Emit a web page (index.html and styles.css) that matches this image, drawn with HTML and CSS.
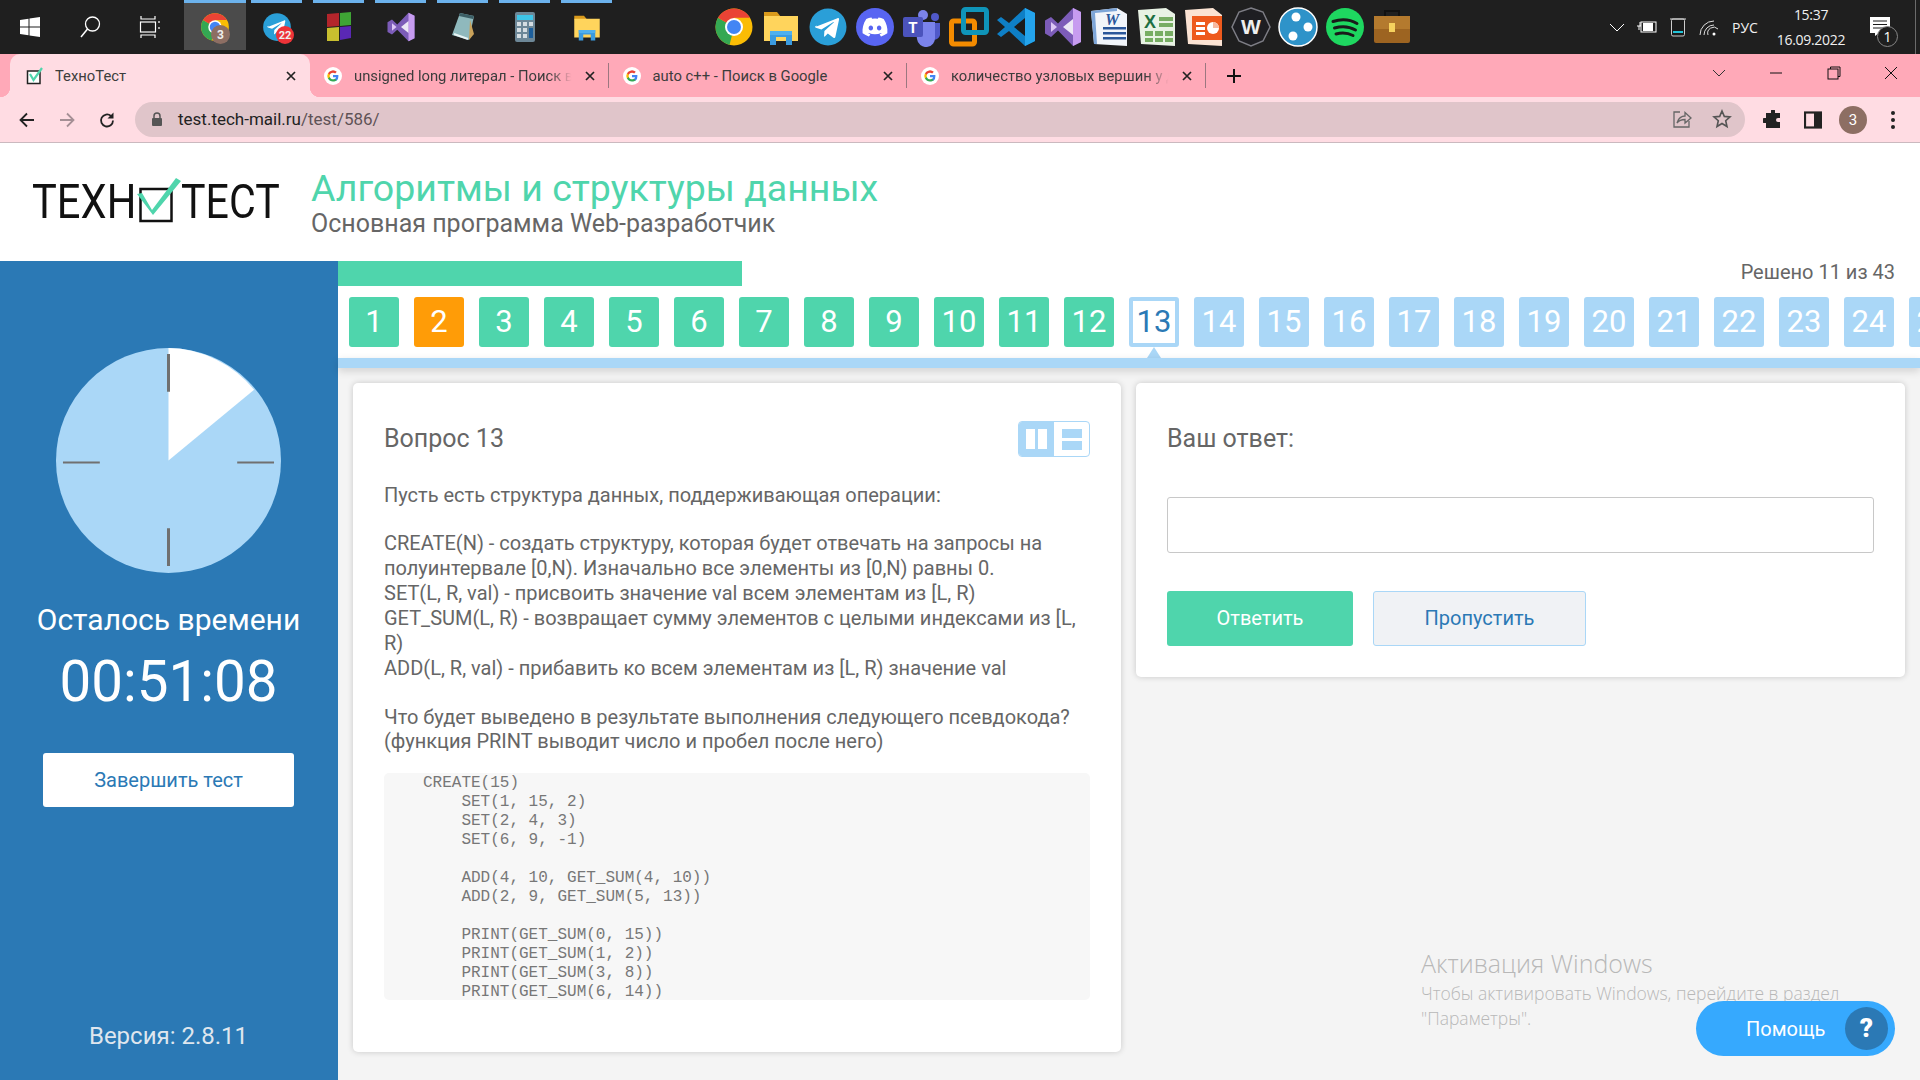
FILE: index.html
```html
<!DOCTYPE html>
<html lang="ru">
<head>
<meta charset="utf-8">
<title>ТехноТест</title>
<link rel="stylesheet" href="styles.css">
</head>
<body>
<svg class="sprite" xmlns="http://www.w3.org/2000/svg">
  <symbol id="i-chrome" viewBox="0 0 40 40">
    <circle cx="20" cy="20" r="18.5" fill="#fbbc04"/>
    <path d="M20 20L4 10.8A18.5 18.5 0 0 0 15.5 38z" fill="#34a853"/>
    <path d="M20 20L4 10.8A18.5 18.5 0 0 1 36 10.8H20z" fill="#ea4335"/>
    <circle cx="20" cy="20" r="9" fill="#fff"/><circle cx="20" cy="20" r="7" fill="#4285f4"/>
  </symbol>
  <symbol id="i-telegram" viewBox="0 0 40 40">
    <circle cx="20" cy="20" r="18.5" fill="#2a9fd8"/>
    <path d="M8.5 19.5l21-8.3c1-.3 1.8.3 1.5 1.6l-3.6 17c-.2 1.2-1 1.5-2 .9l-5.6-4.1-2.7 2.6c-.3.3-.6.5-1.1.5l.4-5.7 9.3-8.6c.4-.4-.1-.6-.7-.2l-11.6 7.2-5.5-1.7c-1.2-.4-1.2-1.2.6-2.2z" fill="#fff"/>
  </symbol>
  <symbol id="i-folder" viewBox="0 0 40 40">
    <path d="M3 5h13l4 5H3z" fill="#d99a1c"/>
    <rect x="3" y="9" width="34" height="25" fill="#ffd45c"/>
    <path d="M9 38V24h22v14h-6v-8H15v8z" fill="#3b9be0"/>
    <rect x="9" y="24" width="22" height="4" fill="#4fb0ee"/>
  </symbol>
  <symbol id="i-vs" viewBox="0 0 40 40">
    <path d="M8 10l-6 3.5v13L8 30l7-6.5 15 15.5 8-4V5l-8-4-15 15.500z" fill="#7c5cb8"/>
    <path d="M30 1l8 4v30l-8 4z" fill="#c79cf0"/>
    <path d="M8 15v10l6-5z" fill="#dcc6f5"/>
    <path d="M30 12v16l-10-8z" fill="#fff" opacity=".85"/>
  </symbol>
  <symbol id="i-g" viewBox="0 0 20 20">
    <circle cx="10" cy="10" r="10" fill="#fff"/>
    <path d="M16 10.200c0-.5 0-.9-.1-1.300H10v2.500h3.400a3 3 0 0 1-1.300 1.900v1.600h2.100a6.300 6.300 0 0 0 1.800-4.700z" fill="#4285f4"/>
    <path d="M10 16.200c1.700 0 3.100-.6 4.200-1.500l-2.100-1.600c-.6.4-1.300.6-2.100.6-1.600 0-3-1.100-3.500-2.600H4.400v1.700a6.300 6.300 0 0 0 5.600 3.400z" fill="#34a853"/>
    <path d="M6.500 11.100a3.800 3.800 0 0 1 0-2.400V7H4.400a6.300 6.300 0 0 0 0 5.700z" fill="#fbbc04"/>
    <path d="M10 6.300c.9 0 1.800.3 2.400.9l1.800-1.800A6.300 6.300 0 0 0 4.400 7l2.100 1.700c.5-1.400 1.900-2.400 3.500-2.400z" fill="#ea4335"/>
  </symbol>
  <symbol id="i-close" viewBox="0 0 12 12">
    <path d="M2 2l8 8M10 2l-8 8" stroke="#222" stroke-width="1.700" fill="none"/>
  </symbol>
</svg>

<div class="taskbar">
  <div class="sys-btn">
    <svg class="i20" viewBox="0 0 20 20"><path d="M0 3l8.500-1.200v7.600H0zM9.500 1.600L20 0v9.400H9.500zM0 10.400h8.500v7.800L0 17zM9.500 10.400H20V20L9.500 18.400z" fill="#fff"/></svg>
  </div>
  <div class="sys-btn">
    <svg class="i24" viewBox="0 0 24 24"><circle cx="14.500" cy="9" r="7" fill="none" stroke="#fff" stroke-width="1.300"/><path d="M9.500 14L3 22" stroke="#fff" stroke-width="1.500"/></svg>
  </div>
  <div class="sys-btn">
    <svg class="i24" viewBox="0 0 24 24"><path d="M3 1v3h14V1M3 23v-3h14v3M21 6v2M21 12v2" stroke="#fff" stroke-width="1.200" fill="none"/><rect x="2.500" y="7" width="15" height="10" fill="none" stroke="#fff" stroke-width="1.200"/></svg>
  </div>
  <div class="pins">
    <div class="pin pin-active">
      <svg class="i30" viewBox="0 0 40 40"><use href="#i-chrome"/></svg>
      <span class="pin-badge pin-badge-brown">3</span>
    </div>
    <div class="pin">
      <svg class="i30" viewBox="0 0 40 40"><use href="#i-telegram"/></svg>
      <span class="pin-badge pin-badge-red">22</span>
    </div>
    <div class="pin">
      <svg class="i30" viewBox="0 0 30 30"><path d="M3 2l12-1v13L3 15z" fill="#b3252b"/><path d="M16 1l11-1v13l-11 1z" fill="#3fa535"/><path d="M3 16l12-1v14L3 29z" fill="#c8bf2f"/><path d="M16 15l11-1v12l-11 2z" fill="#5a28b4"/></svg>
    </div>
    <div class="pin"><svg class="i30" viewBox="0 0 40 40"><use href="#i-vs"/></svg></div>
    <div class="pin">
      <svg class="i30" viewBox="0 0 30 30"><path d="M12 1l14 3-5 24-17-5z" fill="#8fb9bd"/><path d="M12 1l14 3-1 3-14-3z" fill="#3c5f66"/><path d="M22 8l4 14-5 6z" fill="#c9a25a"/><path d="M6 22l14 5" stroke="#e8f4f4" stroke-width="2"/></svg>
    </div>
    <div class="pin">
      <svg class="i30" viewBox="0 0 30 30"><rect x="5" y="0" width="20" height="30" rx="2" fill="#6d8797"/><rect x="7" y="3" width="16" height="5" fill="#3ec5e8"/><path d="M7 10h4v4H7zM13 10h4v4h-4zM19 10h4v4h-4zM7 16h4v4H7zM13 16h4v4h-4zM7 22h4v4H7zM13 22h4v4h-4z" fill="#d5dde2"/><rect x="19" y="16" width="4" height="10" fill="#1d5f9c"/></svg>
    </div>
    <div class="pin"><svg class="i30" viewBox="0 0 40 40"><use href="#i-folder"/></svg></div>
  </div>
  <div class="apps">
    <div class="app"><svg class="i40" viewBox="0 0 40 40"><use href="#i-chrome"/></svg></div>
    <div class="app"><svg class="i40" viewBox="0 0 40 40"><use href="#i-folder"/></svg></div>
    <div class="app"><svg class="i40" viewBox="0 0 40 40"><use href="#i-telegram"/></svg></div>
    <div class="app">
      <svg class="i40" viewBox="0 0 40 40"><circle cx="20" cy="20" r="19" fill="#5865f2"/><g transform="translate(7.500 7.500) scale(1.040)"><path d="M20.317 4.370a19.791 19.791 0 0 0-4.885-1.515.074.074 0 0 0-.079.037c-.21.375-.444.864-.608 1.250a18.270 18.270 0 0 0-5.487 0 12.640 12.640 0 0 0-.617-1.250.077.077 0 0 0-.079-.037A19.736 19.736 0 0 0 3.677 4.370a.070.070 0 0 0-.032.027C.533 9.046-.32 13.580.099 18.057a.082.082 0 0 0 .031.057 19.900 19.900 0 0 0 5.993 3.030.078.078 0 0 0 .084-.028 14.090 14.090 0 0 0 1.226-1.994.076.076 0 0 0-.041-.106 13.107 13.107 0 0 1-1.872-.892.077.077 0 0 1-.008-.128 10.200 10.200 0 0 0 .372-.292.074.074 0 0 1 .077-.010c3.928 1.793 8.180 1.793 12.062 0a.074.074 0 0 1 .078.010c.12.098.246.198.373.292a.077.077 0 0 1-.006.127 12.299 12.299 0 0 1-1.873.892.077.077 0 0 0-.041.107c.36.698.772 1.362 1.225 1.993a.076.076 0 0 0 .084.028 19.839 19.839 0 0 0 6.002-3.030.077.077 0 0 0 .032-.054c.5-5.177-.838-9.674-3.549-13.660a.061.061 0 0 0-.031-.030zM8.020 15.330c-1.183 0-2.157-1.085-2.157-2.419 0-1.333.956-2.419 2.157-2.419 1.210 0 2.176 1.096 2.157 2.420 0 1.333-.956 2.418-2.157 2.418zm7.975 0c-1.183 0-2.157-1.085-2.157-2.419 0-1.333.955-2.419 2.157-2.419 1.210 0 2.176 1.096 2.157 2.420 0 1.333-.946 2.418-2.157 2.418z" fill="#fff"/></g></svg>
    </div>
    <div class="app">
      <svg class="i40" viewBox="0 0 40 40"><circle cx="21" cy="8" r="5" fill="#7b83eb"/><circle cx="33" cy="10" r="4" fill="#5059c9"/><path d="M28 16h10v12a6 6 0 0 1-10 3z" fill="#5059c9"/><path d="M13 15h20v15a9 9 0 0 1-18 2z" fill="#7b83eb"/><rect x="1" y="10" width="20" height="20" rx="2" fill="#4b53bc"/><text x="11" y="26" class="svg-t">T</text></svg>
    </div>
    <div class="app">
      <svg class="i40" viewBox="0 0 40 40"><rect x="2.500" y="14" width="23" height="23" rx="2" fill="none" stroke="#f38b00" stroke-width="5"/><rect x="14.500" y="2.500" width="23" height="23" rx="2" fill="none" stroke="#0f94b8" stroke-width="5"/></svg>
    </div>
    <div class="app">
      <svg class="i40" viewBox="0 0 40 40"><path d="M29 1l10 5v28l-10 5-16-15-8 6-4-3 8-7-8-7 4-3 8 6z" fill="#0e7fc6"/><path d="M29 1l10 5v28l-10 5z" fill="#24a4ec"/><path d="M29 11v18l-11-9z" fill="#1b1b1b"/></svg>
    </div>
    <div class="app"><svg class="i40" viewBox="0 0 40 40"><use href="#i-vs"/></svg></div>
    <div class="app">
      <svg class="i40" viewBox="0 0 40 40"><path d="M1 4l26-3 10 6v32L4 37z" fill="#f2f5fa"/><path d="M1 4l26-3v3L5 6l2 31H4z" fill="#7ea6d8"/><path d="M13 20h23v2.500H13zM13 25h23v2.500H13zM13 30h23v2.500H13z" fill="#2b579a"/><text x="22" y="18" class="svg-w">W</text></svg>
    </div>
    <div class="app">
      <svg class="i40" viewBox="0 0 40 40"><path d="M1 3l28-2 9 6v32L4 37z" fill="#e8f2e4"/><path d="M22 10h14v4H22zM22 16h14v4H22zM8 24h8v5H8zM18 24h8v5h-8zM28 24h8v5h-8zM8 31h8v4H8zM18 31h8v4h-8zM28 31h8v4h-8z" fill="#77ad63"/><text x="13" y="21" class="svg-x">X</text></svg>
    </div>
    <div class="app">
      <svg class="i40" viewBox="0 0 40 40"><path d="M1 3l28-2 9 7v31L4 37z" fill="#fbe3d3"/><rect x="8" y="9" width="30" height="24" fill="#ee5a1d"/><path d="M12 15h9v3h-9zM12 20h9v3h-9zM12 25h9v3h-9z" fill="#fff"/><circle cx="29" cy="21" r="6" fill="#fff"/><path d="M29 21V15a6 6 0 0 1 6 6z" fill="#f7b9a0"/></svg>
    </div>
    <div class="app">
      <svg class="i40" viewBox="0 0 40 40"><path d="M20 1l12 4 7 15-7 14-12 5-12-5-7-14 7-15z" fill="#1e1e22" stroke="#7d7d85" stroke-width="1.500"/><text x="20" y="27" class="svg-wm">W</text></svg>
    </div>
    <div class="app">
      <svg class="i40" viewBox="0 0 40 40"><circle cx="20" cy="20" r="19" fill="#2e93c9" stroke="#fff" stroke-width="1.500"/><circle cx="18" cy="10" r="4.500" fill="#fff"/><circle cx="30" cy="20" r="4.500" fill="#fff"/><circle cx="15" cy="29" r="4.500" fill="#fff"/></svg>
    </div>
    <div class="app">
      <svg class="i40" viewBox="0 0 40 40"><circle cx="20" cy="20" r="19" fill="#1ed760"/><path d="M8 14.500c8-2.500 17-2 24 2M9.500 21c7-2 15-1.500 21 2M11 27c6-1.500 12-1 17 1.500" stroke="#1a1a1a" stroke-width="3" fill="none" stroke-linecap="round"/></svg>
    </div>
    <div class="app">
      <svg class="i40" viewBox="0 0 40 40"><path d="M13 9V4h14v5" fill="none" stroke="#111" stroke-width="2"/><rect x="2" y="9" width="36" height="27" rx="2" fill="#9d6421"/><rect x="2" y="9" width="36" height="13" fill="#b47a2e"/><rect x="17" y="16" width="6" height="9" fill="#f6d25e"/></svg>
    </div>
  </div>
  <div class="tray">
    <div class="tray-slot tray-w30"><svg class="i16" viewBox="0 0 16 16"><path d="M1 5l7 7 7-7" fill="none" stroke="#fff" stroke-width="1"/></svg></div>
    <div class="tray-slot tray-w30"><svg class="i20" viewBox="0 0 20 20"><path d="M3 5v4M0 9h4M2 9v4" stroke="#fff" fill="none"/><rect x="4" y="5" width="15" height="10" fill="none" stroke="#fff"/><rect x="6" y="6" width="10" height="8" fill="#fff"/></svg></div>
    <div class="tray-slot tray-w31"><svg class="i20" viewBox="0 0 20 20"><rect x="3.500" y="2" width="13" height="17" rx="1.500" fill="#1a1a1a" stroke="#ccc"/><path d="M2 2h16" stroke="#ddd"/><path d="M5 14h10v2H5z" fill="#22c4d8"/></svg></div>
    <div class="tray-slot tray-w30"><svg class="i20" viewBox="0 0 20 20"><path d="M2 18a14 14 0 0 1 14-14M6 18a10 10 0 0 1 10-10M10 18a6 6 0 0 1 10-6" fill="none" stroke="#ddd"/><circle cx="16" cy="17" r="1.500" fill="#fff"/></svg></div>
    <div class="tray-lang">РУС</div>
    <div class="tray-clock"><span>15:37</span><span>16.09.2022</span></div>
    <div class="tray-notify">
      <svg class="i20" viewBox="0 0 20 20"><path d="M0 0h20v16H9l-4 3v-3H0z" fill="#fff"/><path d="M3 4h14M3 7.500h14M3 11h14" stroke="#1a1a1a"/></svg>
      <span class="tray-count">1</span>
    </div>
    <div class="tray-desk"></div>
  </div>
</div>

<div class="tabstrip">
  <div class="tab tab-active">
    <svg class="tab-icon" viewBox="0 0 18 18"><rect x="1.500" y="4" width="12.500" height="12.500" fill="#fff" stroke="#222" stroke-width="1.500"/><path d="M4 7l3.500 6L16 1" fill="none" stroke="#4fd5ac" stroke-width="2.200"/></svg>
    <span class="tab-title">ТехноТест</span>
    <svg class="tab-close" viewBox="0 0 12 12"><use href="#i-close"/></svg>
  </div>
  <div class="tab">
    <svg class="tab-icon" viewBox="0 0 20 20"><use href="#i-g"/></svg>
    <span class="tab-title tab-fade">unsigned long литерал - Поиск в Google</span>
    <svg class="tab-close" viewBox="0 0 12 12"><use href="#i-close"/></svg>
  </div>
  <div class="tab">
    <svg class="tab-icon" viewBox="0 0 20 20"><use href="#i-g"/></svg>
    <span class="tab-title">auto c++ - Поиск в Google</span>
    <svg class="tab-close" viewBox="0 0 12 12"><use href="#i-close"/></svg>
  </div>
  <div class="tab">
    <svg class="tab-icon" viewBox="0 0 20 20"><use href="#i-g"/></svg>
    <span class="tab-title tab-fade">количество узловых вершин у дерева</span>
    <svg class="tab-close" viewBox="0 0 12 12"><use href="#i-close"/></svg>
  </div>
  <svg class="tab-plus" viewBox="0 0 16 16"><path d="M8 1v14M1 8h14" stroke="#111" stroke-width="2"/></svg>
  <div class="win-controls">
    <div class="win-btn"><svg class="i14" viewBox="0 0 14 14"><path d="M1 4l6 6 6-6" fill="none" stroke="#333"/></svg></div>
    <div class="win-btn"><svg class="i14" viewBox="0 0 14 14"><path d="M1 7h12" stroke="#111"/></svg></div>
    <div class="win-btn"><svg class="i14" viewBox="0 0 14 14"><rect x="1" y="3" width="10" height="10" fill="none" stroke="#111"/><path d="M3.500 3V1h9.500v9.500h-2" fill="none" stroke="#111"/></svg></div>
    <div class="win-btn"><svg class="i14" viewBox="0 0 14 14"><path d="M1 1l12 12M13 1L1 13" stroke="#111"/></svg></div>
  </div>
</div>

<div class="toolbar">
  <div class="tool-btn"><svg class="i18" viewBox="0 0 18 18"><path d="M16 9H3M9 2.500L2.500 9 9 15.500" fill="none" stroke="#222" stroke-width="1.800"/></svg></div>
  <div class="tool-btn"><svg class="i18" viewBox="0 0 18 18"><path d="M2 9h13M9 2.500L15.500 9 9 15.500" fill="none" stroke="#a58f95" stroke-width="1.800"/></svg></div>
  <div class="tool-btn"><svg class="i18" viewBox="0 0 18 18"><path d="M15 9.500A6 6 0 1 1 13 5" fill="none" stroke="#222" stroke-width="1.800"/><path d="M15.500 1.500v6h-6z" fill="#222"/></svg></div>
  <div class="omnibox">
    <svg class="omni-lock" viewBox="0 0 16 16"><path d="M5 7V5a3 3 0 0 1 6 0v2" fill="none" stroke="#555" stroke-width="1.500"/><rect x="3" y="7" width="10" height="8" rx="1" fill="#555"/></svg>
    <span class="omni-url"><span class="omni-host">test.tech-mail.ru</span>/test/586/</span>
    <div class="omni-btn"><svg class="i20" viewBox="0 0 20 20"><path d="M8 3H2v15h15v-6" fill="none" stroke="#666" stroke-width="1.300"/><path d="M5 14c1-5 5-7 8-7V3.500l6 5.500-6 5v-3.500c-3 0-6 1-8 3.500z" fill="none" stroke="#666" stroke-width="1.300"/></svg></div>
    <div class="omni-btn"><svg class="i20" viewBox="0 0 20 20"><path d="M10 2l2.300 5.400 5.700.5-4.300 3.800 1.300 5.800-5-3-5 3 1.300-5.800L2 7.900l5.700-.5z" fill="none" stroke="#555" stroke-width="1.600"/></svg></div>
  </div>
  <div class="tool-right">
    <div class="tool-btn"><svg class="i20" viewBox="0 0 20 20"><path d="M8 1a2 2 0 0 1 4 0v2h5v5h-2a2 2 0 0 0 0 4h2v6H3v-5H1.500a2.500 2.500 0 0 1 0-5H3V3h5z" fill="#222"/></svg></div>
    <div class="tool-btn"><svg class="i18" viewBox="0 0 18 18"><rect x="1" y="1.500" width="16" height="15" fill="none" stroke="#222" stroke-width="2.200"/><rect x="10" y="1.500" width="7" height="15" fill="#222"/></svg></div>
    <div class="tool-btn"><span class="avatar">3</span></div>
    <div class="tool-btn"><span class="dots"><i></i><i></i><i></i></span></div>
  </div>
</div>

<header class="site-header">
  <div class="logo">
    <span class="logo-word logo-word-a">ТЕХН</span>
    <svg class="logo-check" viewBox="0 0 46 46"><rect x="4.500" y="11" width="31" height="32" fill="none" stroke="#111" stroke-width="2.500"/><path d="M1 16l5-1 10 17L40 0l5 3-28 34z" fill="#4fd5ac"/></svg>
    <span class="logo-word logo-word-b">ТЕСТ</span>
  </div>
  <div class="site-titles">
    <h1 class="site-title">Алгоритмы и структуры данных</h1>
    <div class="site-sub">Основная программа Web-разработчик</div>
  </div>
</header>

<div class="main">
  <aside class="sidebar">
    <svg class="clock" viewBox="0 0 226 226">
      <circle cx="113" cy="113" r="113" fill="#aad7f7"/>
      <path d="M113 113V0A113 113 0 0 1 199 42z" fill="#fff"/>
      <path d="M113 6v38M113 181v38" stroke="#707070" stroke-width="3"/>
      <path d="M7 115h37M182 115h37" stroke="#707070" stroke-width="2"/>
    </svg>
    <div class="time-label">Осталось времени</div>
    <div class="time-value">00:51:08</div>
    <button class="finish-btn">Завершить тест</button>
    <div class="version">Версия: 2.8.11</div>
  </aside>

  <div class="content">
    <div class="progress-row">
      <div class="progress-bar"></div>
      <div class="solved">Решено 11 из 43</div>
    </div>
    <div class="qnav">
      <span class="qn qn-done">1</span><span class="qn qn-skip">2</span><span class="qn qn-done">3</span><span class="qn qn-done">4</span><span class="qn qn-done">5</span><span class="qn qn-done">6</span><span class="qn qn-done">7</span><span class="qn qn-done">8</span><span class="qn qn-done">9</span><span class="qn qn-done">10</span><span class="qn qn-done">11</span><span class="qn qn-done">12</span><span class="qn qn-current">13</span><span class="qn">14</span><span class="qn">15</span><span class="qn">16</span><span class="qn">17</span><span class="qn">18</span><span class="qn">19</span><span class="qn">20</span><span class="qn">21</span><span class="qn">22</span><span class="qn">23</span><span class="qn">24</span><span class="qn">25</span>
    </div>
    <div class="qnav-strip"></div>
    <div class="cards">
      <section class="card card-question">
        <div class="card-head">
          <h2 class="card-title">Вопрос 13</h2>
          <div class="layout-toggle">
            <span class="lt-half lt-on"><i></i><i></i></span>
            <span class="lt-half lt-off"><i></i><i></i></span>
          </div>
        </div>
        <p class="q-p q-p1">Пусть есть структура данных, поддерживающая операции:</p>
        <p class="q-p q-p2">CREATE(N) - создать структуру, которая будет отвечать на запросы на полуинтервале [0,N). Изначально все элементы из [0,N) равны 0.<br>SET(L, R, val) - присвоить значение val всем элементам из [L, R)<br>GET_SUM(L, R) - возвращает сумму элементов с целыми индексами из [L, R)<br>ADD(L, R, val) - прибавить ко всем элементам из [L, R) значение val</p>
        <p class="q-p q-p3">Что будет выведено в результате выполнения следующего псевдокода?<br>(функция PRINT выводит число и пробел после него)</p>
<pre class="code">    CREATE(15)
        SET(1, 15, 2)
        SET(2, 4, 3)
        SET(6, 9, -1)

        ADD(4, 10, GET_SUM(4, 10))
        ADD(2, 9, GET_SUM(5, 13))

        PRINT(GET_SUM(0, 15))
        PRINT(GET_SUM(1, 2))
        PRINT(GET_SUM(3, 8))
        PRINT(GET_SUM(6, 14))</pre>
      </section>
      <section class="card card-answer">
        <h2 class="card-title answer-title">Ваш ответ:</h2>
        <input class="answer-input" type="text">
        <div class="answer-actions">
          <button class="btn btn-answer">Ответить</button>
          <button class="btn btn-skip">Пропустить</button>
        </div>
      </section>
    </div>
  </div>
</div>

<div class="watermark">
  <div class="wm-title">Активация Windows</div>
  <div class="wm-text">Чтобы активировать Windows, перейдите в раздел<br>"Параметры".</div>
</div>

<div class="help">
  <span class="help-label">Помощь</span>
  <span class="help-q">?</span>
</div>
</body>
</html>
```
FILE: styles.css
```css
* { box-sizing: border-box; }
html, body { margin: 0; height: 100%; }
body {
  width: 1920px; height: 1080px; overflow: hidden;
  display: flex; flex-direction: column;
  background: #f4f4f4; color: #666;
  font-family: Roboto, "Noto Sans", sans-serif;
  position: relative;
}
.sprite { display: none; }
svg { display: block; flex: none; }
.i14 { width: 14px; height: 14px; }
.i16 { width: 16px; height: 16px; }
.i18 { width: 18px; height: 18px; }
.i20 { width: 20px; height: 20px; }
.i24 { width: 24px; height: 24px; }
.i30 { width: 30px; height: 30px; }
.i40 { width: 40px; height: 40px; }

/* taskbar */
.taskbar { height: 54px; flex: none; background: #1f1f1f; display: flex; align-items: stretch; }
.sys-btn { width: 60px; display: flex; align-items: center; justify-content: center; }
.pins { display: flex; margin-left: 4px; }
.pin { width: 62px; position: relative; display: flex; align-items: center; justify-content: center; }
.pin::before { content: ""; position: absolute; top: 0; left: 5px; right: 6px; height: 3px; background: #6cb2ec; }
.pin-active { background: linear-gradient(#4b4b4b, #4b4b4b) no-repeat top / 100% 50px; }
.pin-active::before { left: 0; right: 0; }
.pin-badge { position: absolute; border-radius: 50%; color: #eee; font-size: 11px; font-weight: 700; display: flex; align-items: center; justify-content: center; }
.pin-badge-brown { width: 19px; height: 19px; left: 27px; top: 25px; background: #8d6e63; font-size: 12px; }
.pin-badge-red { width: 18px; height: 18px; left: 30px; top: 26px; background: #ee3338; }
.apps { display: flex; margin-left: 92.500px; }
.app { width: 47px; display: flex; align-items: center; justify-content: center; }
.svg-t { font: 700 15px Roboto, sans-serif; fill: #fff; text-anchor: middle; }
.svg-w { font: italic 700 16px "Liberation Serif", serif; fill: #2b579a; text-anchor: middle; }
.svg-x { font: 700 18px "Liberation Sans", sans-serif; fill: #1d6f42; text-anchor: middle; }
.svg-wm { font: 700 21px "Liberation Sans", sans-serif; fill: #eee; text-anchor: middle; }
.tray { margin-left: auto; display: flex; color: #f0f0f0; }
.tray-slot { display: flex; align-items: center; justify-content: center; }
.tray-w30 { width: 30px; }
.tray-w31 { width: 31px; }
.tray-lang { width: 44px; display: flex; align-items: center; justify-content: center; font: 14px "Open Sans", sans-serif; }
.tray-clock { width: 88px; display: flex; flex-direction: column; align-items: center; justify-content: center; gap: 8px; font: 14px/17px "Open Sans", sans-serif; letter-spacing: -.3px; }
.tray-notify { width: 50px; position: relative; display: flex; align-items: center; justify-content: center; }
.tray-count { position: absolute; left: 22px; top: 26px; width: 21px; height: 21px; border-radius: 50%; border: 1px solid #888; background: #1f1f1f; color: #fff; font: 14px/19px "Open Sans", sans-serif; text-align: center; }
.tray-desk { width: 11px; margin-right: 4px; border-right: 1px solid #6b6b6b; }

/* tabs */
.tabstrip { height: 43px; flex: none; background: #ffa9b8; display: flex; align-items: center; padding-left: 10px; color: #3c3c3c; font: 14.800px "Roboto", sans-serif; }
.tab { width: 298.500px; height: 43px; display: flex; align-items: center; padding: 0 9px 0 14px; position: relative; }
.tab + .tab::after { content: ""; position: absolute; right: 0; top: 9px; height: 25px; width: 1px; background: #9c7780; }
.tab-active { width: 300px; background: #ffdce3; border-radius: 10px 10px 0 0; padding-left: 16px; }
.tab-active .tab-title { margin-left: 11px; }
.tab-active::before, .tab-active::after { content: ""; position: absolute; bottom: 0; width: 10px; height: 10px; }
.tab-active::before { left: -10px; background: radial-gradient(circle at 0 0, transparent 10px, #ffdce3 10.500px); }
.tab-active::after { right: -10px; background: radial-gradient(circle at 100% 0, transparent 10px, #ffdce3 10.500px); }
.tab-icon { width: 18px; height: 18px; }
.tab-title { flex: 1; margin: 0 0 0 12px; white-space: nowrap; overflow: hidden; }
.tab-fade { -webkit-mask-image: linear-gradient(90deg, #000 88%, transparent 98%); mask-image: linear-gradient(90deg, #000 88%, transparent 98%); }
.tab-close { width: 12px; height: 12px; margin: 0 4px 0 8px; }
.tab-plus { width: 16px; height: 16px; margin-left: 20px; }
.win-controls { margin-left: auto; display: flex; }
.win-btn { width: 57.500px; height: 43px; display: flex; align-items: center; justify-content: center; padding-bottom: 6px; }

/* toolbar */
.toolbar { height: 46px; flex: none; background: #ffdce3; border-bottom: 1px solid #cbb9bf; display: flex; align-items: center; padding: 0 7px; }
.tool-btn { width: 40px; height: 36px; display: flex; align-items: center; justify-content: center; }
.omnibox { margin-left: 8px; flex: 1; height: 35px; margin-top: -1px; background: #e0c5ca; border-radius: 18px; display: flex; align-items: center; padding: 0 3px 0 14px; }
.omni-lock { width: 16px; height: 16px; }
.omni-url { margin-left: 13px; flex: 1; font: 17px Roboto, sans-serif; color: #5e5256; }
.omni-host { color: #222; }
.omni-btn { width: 40px; display: flex; align-items: center; justify-content: center; }
.tool-right { margin-left: 8px; display: flex; }
.avatar { width: 28px; height: 28px; border-radius: 50%; background: #8d6e63; color: #fff; font: 15px/28px Roboto, sans-serif; text-align: center; }
.dots { display: flex; flex-direction: column; gap: 3px; }
.dots i { width: 4px; height: 4px; border-radius: 50%; background: #222; }

/* site header */
.site-header { height: 118px; flex: none; background: #fff; display: flex; padding-left: 32px; }
.logo { width: 279px; flex: none; display: flex; align-items: center; color: #111; }
.logo-word { font: 49px/50px Roboto, sans-serif; transform-origin: left center; white-space: nowrap; }
.logo-word-a { width: 104px; transform: scaleX(.85); }
.logo-word-b { width: 92px; transform: scaleX(.84); }
.logo-check { width: 46px; height: 46px; margin-top: -3px; margin-right: -1px; }
.site-titles { padding-top: 23px; }
.site-title { margin: 0; font: 400 37.500px/44px Roboto, sans-serif; color: #4fd5ac; }
.site-sub { font: 25px/28px Roboto, sans-serif; color: #666; }

/* sidebar */
.main { flex: 1; display: flex; min-height: 0; }
.sidebar { width: 338px; flex: none; background: #2b79b5; color: #fff; display: flex; flex-direction: column; align-items: center; padding: 87px 1px 29px 0; }
.clock { width: 225px; height: 225px; }
.time-label { margin-top: 29px; font-size: 30px; line-height: 36px; }
.time-value { margin-top: 12px; font-size: 56.500px; line-height: 64px; }
.finish-btn { margin-top: 39px; width: 251px; height: 54px; border: 0; border-radius: 3px; background: #fff; color: #2b79b5; font: 20px Roboto, sans-serif; }
.version { margin-top: auto; font-size: 24px; line-height: 30px; color: #dfe6ee; }

/* content */
.content { flex: 1; min-width: 0; display: flex; flex-direction: column; }
.progress-row { height: 25px; flex: none; display: flex; justify-content: space-between; padding-right: 25px; background: #fff; }
.progress-bar { width: 404px; background: #4fd5ac; }
.solved { font-size: 20px; line-height: 22px; color: #666; }
.qnav { height: 72px; flex: none; background: #fff; display: flex; gap: 15px; padding: 11px 0 0 11px; overflow: hidden; }
.qn { width: 50px; height: 50px; flex: none; border-radius: 3px; background: #aad7f7; color: #fff; font: 400 31px/50px Roboto, sans-serif; text-align: center; position: relative; }
.qn-done { background: #4fd5ac; }
.qn-skip { background: #ff9c07; }
.qn-current { background: #fff; color: #2b79b5; border: 4px solid #aad7f7; line-height: 42px; }
.qn-current::after { content: ""; position: absolute; left: 50%; top: 46px; margin-left: -7px; border-style: solid; border-color: transparent transparent #aad7f7; border-width: 0 7px 11px; }
.qnav-strip { height: 10px; flex: none; background: #aad7f7; box-shadow: 0 3px 8px rgba(0,0,0,.15); position: relative; }
.cards { flex: 1; min-height: 0; display: grid; grid-template-columns: 768px 769px; gap: 15px; padding: 15px 15px 28px; align-items: start; }
.card { background: #fff; border-radius: 5px; box-shadow: 0 0 6px rgba(0,0,0,.18); padding: 0 31px; }
.card-question { height: 669px; padding-top: 38px; }
.card-head { display: flex; justify-content: space-between; align-items: center; height: 36px; }
.card-title { margin: 0; font: 400 25px/30px Roboto, sans-serif; color: #666; }
.layout-toggle { width: 72px; height: 36px; display: flex; border-radius: 4px; border: 1px solid #aad7f7; overflow: hidden; }
.lt-half { flex: 1; display: flex; align-items: center; justify-content: center; gap: 3px; }
.lt-on { background: #aad7f7; }
.lt-on i { width: 9px; height: 20px; background: #fff; }
.lt-off { flex-direction: column; }
.lt-off i { width: 20px; height: 9px; background: #aad7f7; }
.q-p { margin: 0; font-size: 20px; line-height: 25px; color: #666; }
.q-p1 { margin-top: 26px; }
.q-p2 { margin-top: 23px; }
.q-p3 { margin-top: 24px; line-height: 24px; }
.code { margin: 20px 0 0; padding: 1px 0 0 .6px; height: 227px; overflow: hidden; background: #f7f7f7; border-radius: 5px; font: 16px/19px "Liberation Mono", monospace; color: #777; }
.card-answer { height: 294px; padding-top: 41px; }
.answer-title { line-height: 30px; }
.answer-input { display: block; width: 100%; height: 56px; margin-top: 43px; border: 1px solid #c8c8c8; border-radius: 3px; background: #fff; }
.answer-actions { display: flex; gap: 20px; margin-top: 38px; }
.btn { height: 55px; border-radius: 3px; padding: 0 0 2px; font: 20px Roboto, sans-serif; }
.btn-answer { width: 186px; border: 0; background: #4fd5ac; color: #fff; }
.btn-skip { width: 213px; border: 1px solid #aad7f7; background: #f0f2f5; color: #2b79b5; }

/* overlays */
.watermark { position: absolute; left: 1421px; top: 945px; color: #b8b8b8; font-family: "Open Sans", sans-serif; font-weight: 300; }
.wm-title { font-size: 25px; line-height: 36px; }
.wm-text { font-size: 17.500px; line-height: 25px; }
.help { position: absolute; left: 1696px; top: 1001px; width: 199px; height: 55px; border-radius: 28px; background: #36a9fe; color: #fff; display: flex; align-items: center; padding: 0 7px 0 50px; justify-content: space-between; font-size: 20px; }
.help-q { width: 43px; height: 43px; border-radius: 50%; background: #2b79b5; font-size: 26px; font-weight: 900; line-height: 43px; text-align: center; }
```
